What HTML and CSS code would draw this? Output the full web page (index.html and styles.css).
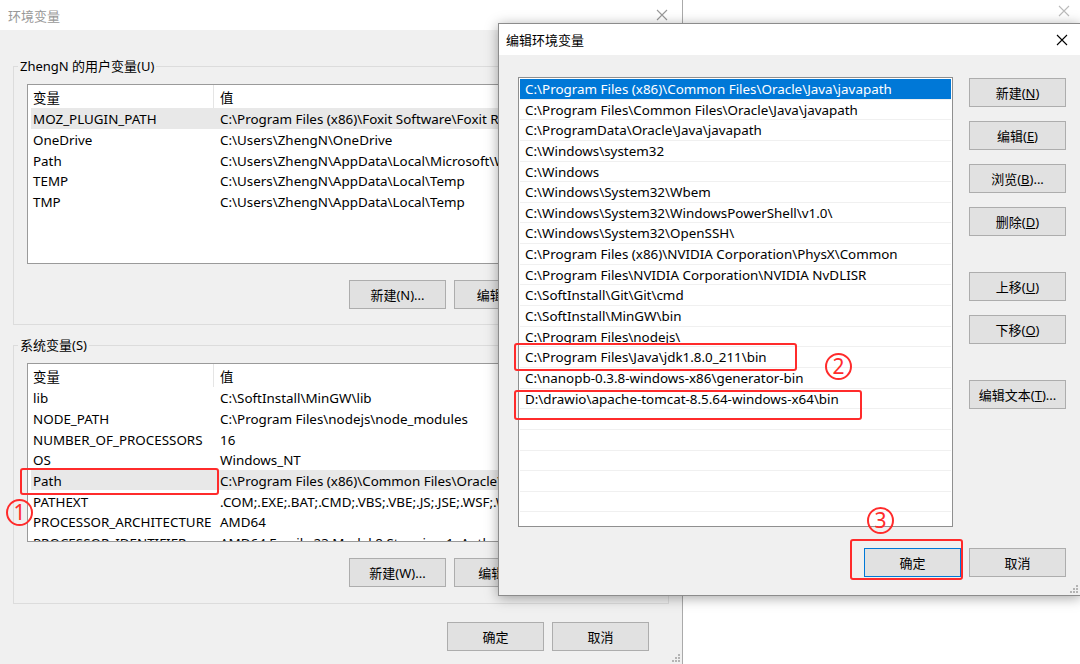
FILE: index.html
```html
<!DOCTYPE html>
<html lang="zh-CN">
<head>
    <meta charset="UTF-8">
    <title>环境变量</title>
    <link rel="stylesheet" href="styles.css">
</head>
<body>
    <div class="env-win">
        <div class="titlebar">
            <span class="title">环境变量</span>
            <svg class="close" width="12" height="12" viewBox="0 0 12 12"><path d="M1 1L11 11M11 1L1 11" stroke="currentColor" stroke-width="1.1"/></svg>
        </div>
        <div class="env-body">
            <fieldset class="group">
                <legend>ZhengN 的用户变量(U)</legend>
                <div class="varlist user-list">
                    <div class="vrow head"><span class="c1">变量</span><span class="c2">值</span></div>
                    <div class="vrow hot"><span class="c1">MOZ_PLUGIN_PATH</span><span class="c2">C:\Program Files (x86)\Foxit Software\Foxit Reader\plugins\</span></div>
                    <div class="vrow"><span class="c1">OneDrive</span><span class="c2">C:\Users\ZhengN\OneDrive</span></div>
                    <div class="vrow"><span class="c1">Path</span><span class="c2">C:\Users\ZhengN\AppData\Local\Microsoft\WindowsApps;</span></div>
                    <div class="vrow"><span class="c1">TEMP</span><span class="c2">C:\Users\ZhengN\AppData\Local\Temp</span></div>
                    <div class="vrow"><span class="c1">TMP</span><span class="c2">C:\Users\ZhengN\AppData\Local\Temp</span></div>
                </div>
                <div class="btnrow">
                    <button class="btn">新建(N)...</button>
                    <button class="btn">编辑(E)...</button>
                    <button class="btn">删除(D)</button>
                </div>
            </fieldset>

            <fieldset class="group sys-group">
                <legend>系统变量(S)</legend>
                <div class="varlist sys-list">
                    <div class="vrow head"><span class="c1">变量</span><span class="c2">值</span></div>
                    <div class="vrow"><span class="c1">lib</span><span class="c2">C:\SoftInstall\MinGW\lib</span></div>
                    <div class="vrow"><span class="c1">NODE_PATH</span><span class="c2">C:\Program Files\nodejs\node_modules</span></div>
                    <div class="vrow"><span class="c1">NUMBER_OF_PROCESSORS</span><span class="c2">16</span></div>
                    <div class="vrow"><span class="c1">OS</span><span class="c2">Windows_NT</span></div>
                    <div class="vrow hot"><span class="c1">Path</span><span class="c2">C:\Program Files (x86)\Common Files\Oracle\Java\javapath;</span></div>
                    <div class="vrow"><span class="c1">PATHEXT</span><span class="c2">.COM;.EXE;.BAT;.CMD;.VBS;.VBE;.JS;.JSE;.WSF;.WSH;.MSC</span></div>
                    <div class="vrow"><span class="c1">PROCESSOR_ARCHITECTURE</span><span class="c2">AMD64</span></div>
                    <div class="vrow"><span class="c1">PROCESSOR_IDENTIFIER</span><span class="c2">AMD64 Family 23 Model 8 Stepping 1, AuthenticAMD</span></div>
                </div>
                <div class="btnrow">
                    <button class="btn">新建(W)...</button>
                    <button class="btn">编辑(I)...</button>
                    <button class="btn">删除(L)</button>
                </div>
            </fieldset>

            <div class="btnrow dialog-btns">
                <button class="btn">确定</button>
                <button class="btn">取消</button>
            </div>
        </div>
        <svg class="grip" width="10" height="10" viewBox="0 0 10 10"><g fill="#b4b4b4"><rect x="8" y="2" width="2" height="2"/><rect x="5" y="5" width="2" height="2"/><rect x="8" y="5" width="2" height="2"/><rect x="2" y="8" width="2" height="2"/><rect x="5" y="8" width="2" height="2"/><rect x="8" y="8" width="2" height="2"/></g></svg>
    </div>

    <div class="back-win">
        <svg class="close" width="12" height="12" viewBox="0 0 12 12"><path d="M1 1L11 11M11 1L1 11" stroke="currentColor" stroke-width="1.1"/></svg>
    </div>

    <div class="edit-win">
        <div class="titlebar edit-title">
            <span class="title">编辑环境变量</span>
            <svg class="close" width="12" height="12" viewBox="0 0 12 12"><path d="M1 1L11 11M11 1L1 11" stroke="currentColor" stroke-width="1.1"/></svg>
        </div>
        <div class="edit-body">
            <div class="edit-main">
                <div class="pathlist">
                    <div class="prow sel">C:\Program Files (x86)\Common Files\Oracle\Java\javapath</div>
                    <div class="prow">C:\Program Files\Common Files\Oracle\Java\javapath</div>
                    <div class="prow">C:\ProgramData\Oracle\Java\javapath</div>
                    <div class="prow">C:\Windows\system32</div>
                    <div class="prow">C:\Windows</div>
                    <div class="prow">C:\Windows\System32\Wbem</div>
                    <div class="prow">C:\Windows\System32\WindowsPowerShell\v1.0\</div>
                    <div class="prow">C:\Windows\System32\OpenSSH\</div>
                    <div class="prow">C:\Program Files (x86)\NVIDIA Corporation\PhysX\Common</div>
                    <div class="prow">C:\Program Files\NVIDIA Corporation\NVIDIA NvDLISR</div>
                    <div class="prow">C:\SoftInstall\Git\Git\cmd</div>
                    <div class="prow">C:\SoftInstall\MinGW\bin</div>
                    <div class="prow">C:\Program Files\nodejs\</div>
                    <div class="prow">C:\Program Files\Java\jdk1.8.0_211\bin</div>
                    <div class="prow">C:\nanopb-0.3.8-windows-x86\generator-bin</div>
                    <div class="prow">D:\drawio\apache-tomcat-8.5.64-windows-x64\bin</div>
                    <div class="prow"></div>
                    <div class="prow"></div>
                    <div class="prow"></div>
                    <div class="prow"></div>
                    <div class="prow"></div>
                    <div class="prow"></div>
                </div>
                <div class="side-btns">
                    <button class="btn">新建(<u>N</u>)</button>
                    <button class="btn">编辑(<u>E</u>)</button>
                    <button class="btn">浏览(<u>B</u>)...</button>
                    <button class="btn">删除(<u>D</u>)</button>
                    <button class="btn spaced">上移(<u>U</u>)</button>
                    <button class="btn">下移(<u>O</u>)</button>
                    <button class="btn spaced">编辑文本(<u>T</u>)...</button>
                </div>
            </div>
            <div class="btnrow edit-foot">
                <button class="btn default">确定</button>
                <button class="btn">取消</button>
            </div>
        </div>
        <svg class="grip" width="10" height="10" viewBox="0 0 10 10"><g fill="#b4b4b4"><rect x="8" y="2" width="2" height="2"/><rect x="5" y="5" width="2" height="2"/><rect x="8" y="5" width="2" height="2"/><rect x="2" y="8" width="2" height="2"/><rect x="5" y="8" width="2" height="2"/><rect x="8" y="8" width="2" height="2"/></g></svg>
    </div>

    <!-- red annotations -->
    <div class="mark mark-path"></div>
    <div class="mark mark-jdk"></div>
    <div class="mark mark-tomcat"></div>
    <div class="mark mark-ok"></div>
    <span class="num num-1">1</span>
    <span class="num num-2">2</span>
    <span class="num num-3">3</span>
</body>
</html>
```

FILE: styles.css
```css
* {
    box-sizing: border-box;
}

body {
    margin: 0;
    width: 1080px;
    height: 664px;
    overflow: hidden;
    position: relative;
    background: #fff;
    color: #000;
    font-family: "Noto Sans", "Noto Sans CJK SC", sans-serif;
    font-size: 13px;
}

/* ---------- windows ---------- */

.env-win {
    position: relative;
    width: 683px;
    height: 664px;
    background: #f0f0f0;
    border-right: 1px solid #aaa;
}

.titlebar {
    height: 30px;
    background: #fff;
    display: flex;
    align-items: center;
    justify-content: space-between;
    padding: 0 14px 0 8px;
}

.titlebar .title {
    color: #999;
}

.titlebar .close {
    color: #999;
}

.back-win {
    position: absolute;
    left: 683px;
    top: 0;
    right: 0;
    height: 22px;
    display: flex;
    justify-content: flex-end;
    align-items: center;
    padding-right: 10px;
    color: #bbb;
}

.edit-win {
    position: absolute;
    left: 498px;
    top: 23px;
    width: 583px;
    height: 573px;
    background: #f0f0f0;
    border: 1px solid #8c8c8c;
    box-shadow: 0 2px 12px rgba(0, 0, 0, 0.35);
}

.edit-title {
    height: 31px;
    padding: 0 12px 0 7px;
}

.edit-title .title,
.edit-title .close {
    color: #000;
}

.grip {
    position: absolute;
    right: 2px;
    bottom: 2px;
}

/* ---------- buttons ---------- */

.btn {
    width: 97px;
    height: 29px;
    padding: 0;
    background: #e1e1e1;
    border: 1px solid #adadad;
    color: #000;
    font: inherit;
}

.btn.default {
    border-color: #0078d7;
}

.btnrow {
    display: flex;
    justify-content: flex-end;
    gap: 8px;
    margin-top: 16px;
}

/* ---------- environment dialog ---------- */

.env-body {
    padding: 27px 0 0 13px;
}

.group {
    width: 656px;
    margin: 0;
    border: 1px solid #dcdcdc;
    padding: 9px 12px 15px 13px;
}

.group legend {
    line-height: 18px;
    padding: 0 2px;
    margin-left: -9px;
}

.sys-group {
    margin-top: 11px;
    padding-bottom: 16px;
}

.varlist {
    height: 180px;
    background: #fff;
    border: 1px solid #9a9a9a;
    overflow: hidden;
    padding-left: 3px;
    font-size: 13.4px;
}

.sys-list {
    height: 179px;
}

.vrow {
    display: flex;
    height: 20.7px;
    padding-top: 2px;
    align-items: center;
    white-space: nowrap;
}

.vrow.head {
    height: 23px;
    padding-top: 0;
    align-items: stretch;
}

.vrow.head span {
    display: flex;
    align-items: center;
    padding-top: 1px;
}

.vrow.head .c1 {
    border-right: 1px solid #e5e5e5;
}

.vrow.hot {
    background: #e8e8e8;
}

.c1 {
    flex: none;
    width: 183px;
    padding-left: 2px;
}

.c2 {
    padding-left: 6px;
}

.dialog-btns {
    margin: 18px 33px 0 0;
}

/* ---------- edit dialog ---------- */

.edit-body {
    padding: 22px 14px 0 19px;
}

.edit-main {
    display: flex;
    gap: 16px;
}

.pathlist {
    width: 435px;
    height: 450px;
    background: #fff;
    border: 1px solid #8f8f8f;
    padding: 1px;
    overflow: hidden;
    font-size: 13.4px;
}

.prow {
    height: 20.65px;
    line-height: 19.65px;
    padding: 1px 0 0 5px;
    border-bottom: 1px solid #f0f0f0;
    white-space: nowrap;
}

.prow.sel {
    background: #0078d7;
    color: #fff;
}

.side-btns {
    display: flex;
    flex-direction: column;
    gap: 14px;
    padding-top: 1px;
}

.side-btns .spaced {
    margin-top: 22px;
}

.edit-foot {
    margin-top: 21px;
}

/* ---------- annotations ---------- */

.mark {
    position: absolute;
    border: 2px solid #ff2b2b;
    border-radius: 3px;
}

.mark-path {
    left: 20px;
    top: 468px;
    width: 199px;
    height: 27px;
}

.mark-jdk {
    left: 514px;
    top: 343px;
    width: 283px;
    height: 28px;
}

.mark-tomcat {
    left: 514px;
    top: 390px;
    width: 348px;
    height: 30px;
}

.mark-ok {
    left: 850px;
    top: 539px;
    width: 113px;
    height: 41px;
}

.num {
    position: absolute;
    width: 27px;
    height: 27px;
    border: 2px solid #ff2b2b;
    border-radius: 50%;
    color: #ff2b2b;
    font-size: 21px;
    line-height: 23px;
    text-align: center;
}

.num-1 {
    left: 6px;
    top: 499px;
}

.num-2 {
    left: 825px;
    top: 353px;
}

.num-3 {
    left: 867px;
    top: 507px;
}
```
